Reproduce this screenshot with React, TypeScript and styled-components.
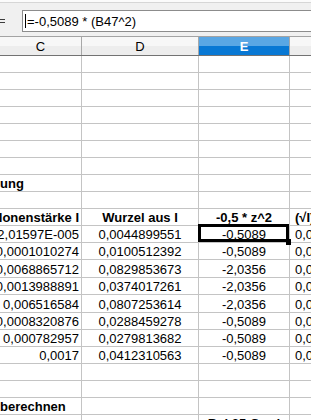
import React from "react";
import styled, { createGlobalStyle, css } from "styled-components";

const GlobalStyle = createGlobalStyle`
  html, body { margin: 0; padding: 0; background: #ffffff; overflow: hidden; }
  body { font-family: "Liberation Sans", Arial, sans-serif; }
`;

const Screen = styled.div`
  width: 311px;
  height: 420px;
  overflow: hidden;
  display: flex;
  flex-direction: column;
  background: #ffffff;
`;

const TopEdge = styled.div`
  height: 2px;
  background: #fbfbfb;
  border-bottom: 1px solid #d6d6d6;
  flex: none;
`;

const FormulaBar = styled.div`
  height: 33px;
  box-sizing: border-box;
  flex: none;
  background: #f0f0f0;
  display: flex;
  align-items: flex-start;
  padding-top: 7px;
`;

const IconSlot = styled.div`
  width: 22px;
  height: 22px;
  flex: none;
  display: flex;
  flex-direction: column;
  justify-content: center;
  gap: 2px;
`;

const EqualsBar = styled.span`
  display: block;
  width: 5px;
  height: 1px;
  background: #3c3c3c;
`;

const FormulaInput = styled.div`
  flex: 1;
  height: 22px;
  box-sizing: border-box;
  border: 1px solid #8c8c8c;
  border-right: none;
  background: #ffffff;
  display: flex;
  align-items: center;
  padding-left: 2px;
  font-size: 13px;
  color: #000;
  white-space: nowrap;
`;

const Caret = styled.span`
  display: block;
  width: 1px;
  height: 14px;
  background: #000;
  margin-right: 1px;
`;

const COLS = "82px 117px 91px 91px";

const HeaderRow = styled.div`
  display: grid;
  grid-template-columns: ${COLS};
  height: 20px;
  box-sizing: border-box;
  border-top: 1px solid #a3a3a3;
  border-bottom: 1px solid #727272;
  flex: none;
`;

const HeaderCell = styled.div<{ $active?: boolean }>`
  display: flex;
  align-items: center;
  justify-content: center;
  font-size: 13px;
  line-height: 15px;
  border-right: 1px solid #a8a8a8;
  background: linear-gradient(#f7f7f7 0 50%, #ededed 50% 100%);
  color: #000;
  ${(p) =>
    p.$active &&
    css`
      background: linear-gradient(#5aa7e4 0 50%, #0878d4 50% 100%);
      color: #ffffff;
      font-weight: bold;
    `}
`;

const Row = styled.div<{ $h: number }>`
  display: grid;
  grid-template-columns: ${COLS};
  height: ${(p) => p.$h}px;
  flex: none;
`;

type Align = "left" | "right" | "center" | "start";

const Cell = styled.div<{ $align?: Align; $bold?: boolean; $sel?: boolean }>`
  position: relative;
  box-sizing: border-box;
  height: 100%;
  border-right: 1px solid #c4c4c4;
  border-bottom: 1px solid #c4c4c4;
  display: flex;
  align-items: flex-end;
  justify-content: ${(p) =>
    p.$align === "right" ? "flex-end" : p.$align === "center" ? "center" : "flex-start"};
  padding: ${(p) =>
    p.$align === "right" ? "0 2px 0 0" : p.$align === "start" ? "0 0 0 5px" : "0"};
  overflow: ${(p) => (p.$align === "left" || p.$sel ? "visible" : "hidden")};
  z-index: ${(p) => (p.$sel ? 2 : "auto")};
  white-space: nowrap;
  font-size: 13px;
  line-height: 15px;
  font-weight: ${(p) => (p.$bold ? "bold" : "normal")};
  color: #000;
`;

const CellText = styled.span`
  flex: none;
`;

const Cursor = styled.div`
  position: absolute;
  top: -2px;
  left: -1px;
  right: 0;
  bottom: 0;
  border: 3px solid #000;
  pointer-events: none;
`;

const Handle = styled.div`
  position: absolute;
  right: -5px;
  bottom: -6px;
  width: 5px;
  height: 6px;
  background: #000;
`;

type CellDef = { t?: string; a?: Align; b?: boolean; sel?: boolean };

const cVals = [
  "2,01597E-005",
  "0,0001010274",
  "0,0068865712",
  "0,0013988891",
  "0,006516584",
  "0,0008320876",
  "0,000782957",
  "0,0017",
];
const dVals = [
  "0,0044899551",
  "0,0100512392",
  "0,0829853673",
  "0,0374017261",
  "0,0807253614",
  "0,0288459278",
  "0,0279813682",
  "0,0412310563",
];
const eVals = ["-0,5089", "-0,5089", "-2,0356", "-2,0356", "-2,0356", "-0,5089", "-0,5089", "-0,5089"];
const fVals = [
  "0,0044698856",
  "0,0099512192",
  "0,0766264511",
  "0,0360533987",
  "0,0746955872",
  "0,0280371463",
  "0,0272197033",
  "0,0395983722",
];

const empty: CellDef[] = [{}, {}, {}, {}];

type RowDef = { h: number; cells: CellDef[] };

const dataHeights = [17, 17, 18, 17, 18, 17, 17, 17];

const rows: RowDef[] = [
  ...Array.from({ length: 7 }, () => ({ h: 17, cells: empty })),
  { h: 17, cells: [{ t: "ung", a: "left", b: true }, {}, {}, {}] },
  { h: 17, cells: empty },
  {
    h: 17,
    cells: [
      { t: "Ionenstärke I", a: "right", b: true },
      { t: "Wurzel aus I", a: "center", b: true },
      { t: "-0,5 * z^2", a: "center", b: true },
      { t: "(√I)/(1+√I)", a: "start", b: true },
    ],
  },
  ...cVals.map((c, i) => ({
    h: dataHeights[i],
    cells: [
      { t: c, a: "right" as Align },
      { t: dVals[i], a: "center" as Align },
      { t: eVals[i], a: "center" as Align, sel: i === 0 },
      { t: fVals[i], a: "start" as Align },
    ],
  })),
  { h: 17, cells: empty },
  { h: 17, cells: empty },
  { h: 17, cells: [{ t: "berechnen", a: "left", b: true }, {}, {}, {}] },
  { h: 17, cells: [{}, {}, { t: "Bei 25 Grad", a: "center", b: true }, {}] },
];

export default function App() {
  return (
    <>
      <GlobalStyle />
      <Screen>
        <TopEdge />
        <FormulaBar>
          <IconSlot>
            <EqualsBar />
            <EqualsBar />
          </IconSlot>
          <FormulaInput>
            <Caret />
            =-0,5089 * (B47^2)
          </FormulaInput>
        </FormulaBar>
        <HeaderRow>
          <HeaderCell>C</HeaderCell>
          <HeaderCell>D</HeaderCell>
          <HeaderCell $active>E</HeaderCell>
          <HeaderCell>F</HeaderCell>
        </HeaderRow>
        {rows.map((r, ri) => (
          <Row key={ri} $h={r.h}>
            {r.cells.map((c, ci) => (
              <Cell key={ci} $align={c.a} $bold={c.b} $sel={c.sel}>
                {c.t && <CellText>{c.t}</CellText>}
                {c.sel && (
                  <Cursor>
                    <Handle />
                  </Cursor>
                )}
              </Cell>
            ))}
          </Row>
        ))}
      </Screen>
    </>
  );
}
